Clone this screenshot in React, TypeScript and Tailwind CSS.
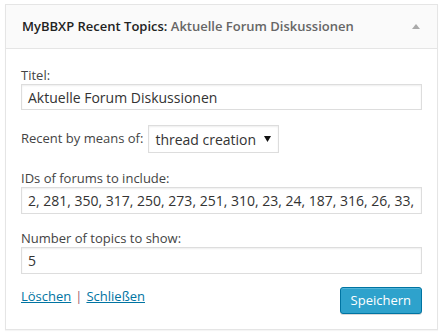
const App = () => {
  return (
    <div className="w-[443px] h-[336px] bg-white pt-[4px] px-[5px] font-['Open_Sans',sans-serif] text-[13px] text-[#444]">
      <div className="border border-[#e5e5e5] bg-white shadow-[0_1px_1px_rgba(0,0,0,0.04)]">
        <div className="h-[44px] flex items-center justify-between pl-[16px] pr-[17px] bg-[#fafafa] border-b border-[#e5e5e5]">
          <p className="text-[13px] font-[600] text-[#222]">
            MyBBXP Recent Topics: <span className="text-[#666]">Aktuelle Forum Diskussionen</span>
          </p>
          <svg width="8" height="5" viewBox="0 0 8 5">
            <path d="M0 5 L4 0 L8 5 Z" fill="#aaa" />
          </svg>
        </div>
        <div className="px-[15px] pt-[17px] pb-[15px]">
          <label className="block leading-[18px]">Titel:</label>
          <div className="h-[26px] border border-[#ddd] shadow-[inset_0_1px_2px_rgba(0,0,0,0.07)] flex items-center px-[6px] text-[14px] text-[#333]">
            Aktuelle Forum Diskussionen
          </div>

          <div className="mt-[15px] flex items-center gap-[5px]">
            <span>Recent by means of:</span>
            <div className="h-[28px] w-[131px] border border-[#ddd] shadow-[inset_0_1px_2px_rgba(0,0,0,0.07)] flex items-center justify-between pl-[6px] pr-[7px] text-[14px] text-[#333]">
              <span>thread creation</span>
              <svg width="7" height="6" viewBox="0 0 7 6">
                <path d="M0 0 L7 0 L3.5 6 Z" fill="#111" />
              </svg>
            </div>
          </div>

          <label className="block leading-[18px] mt-[16px]">IDs of forums to include:</label>
          <div className="h-[27px] border border-[#ddd] shadow-[inset_0_1px_2px_rgba(0,0,0,0.07)] flex items-center px-[6px] text-[14px] text-[#333] overflow-hidden whitespace-nowrap">
            2, 281, 350, 317, 250, 273, 251, 310, 23, 24, 187, 316, 26, 33,
          </div>

          <label className="block leading-[18px] mt-[15px]">Number of topics to show:</label>
          <div className="h-[27px] border border-[#ddd] shadow-[inset_0_1px_2px_rgba(0,0,0,0.07)] flex items-center px-[6px] text-[14px] text-[#333]">
            5
          </div>

          <div className="mt-[13px] flex items-start justify-between">
            <div className="pt-[0px] leading-[18px]">
              <a className="text-[#0074a2] underline">Löschen</a>
              <span className="text-[#a05a6e] mx-[4px]">|</span>
              <a className="text-[#0074a2] underline">Schließen</a>
            </div>
            <button className="h-[27px] px-[10px] rounded-[3px] bg-[#2ea2cc] border border-[#0074a2] text-white text-[13px] shadow-[inset_0_1px_0_rgba(120,200,230,0.5),0_1px_0_rgba(0,0,0,0.15)]">
              Speichern
            </button>
          </div>
        </div>
      </div>
    </div>
  );
};

export default App;
